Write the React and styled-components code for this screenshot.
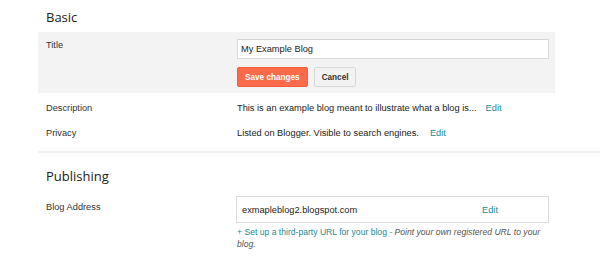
import styled, { createGlobalStyle } from 'styled-components'

const Global = createGlobalStyle`
  body {
    margin: 0;
    background: #fff;
    font-family: "Liberation Sans", Arial, sans-serif;
    color: #222;
  }
`

const Page = styled.div`
  width: 600px;
  height: 258px;
  padding-left: 38px;
  box-sizing: border-box;
  overflow: hidden;
`

const SectionTitle = styled.h2`
  margin: 0;
  padding: ${p => p.$top}px 0 0 8px;
  font-family: "Open Sans", sans-serif;
  font-weight: 400;
  font-size: 13px;
  line-height: 18px;
  color: #222;
  height: ${p => p.$height}px;
  box-sizing: border-box;
`

const Row = styled.div`
  display: grid;
  grid-template-columns: 191px 1fr;
  width: 517px;
  box-sizing: border-box;
  padding: ${p => p.$pad || '0 6px 0 8px'};
  background: ${p => (p.$editing ? '#f3f3f3' : 'transparent')};
  font-size: 9.25px;
  line-height: 12px;
`

const Label = styled.div`
  color: #333;
  padding-top: ${p => p.$top || 0}px;
`

const Value = styled.div`
  color: #222;
`

const TextInput = styled.input`
  display: block;
  width: 100%;
  height: 20px;
  box-sizing: border-box;
  border: 1px solid #dcdcdc;
  border-top-color: #d4d4d4;
  background: #fff;
  padding: 0 3px;
  font-family: "Liberation Sans", Arial, sans-serif;
  font-size: 9.25px;
  color: #222;
  outline: none;
`

const Buttons = styled.div`
  display: flex;
  gap: 6px;
  margin-top: 8px;
`

const Button = styled.button`
  height: 20px;
  box-sizing: border-box;
  padding: 0 7px;
  border-radius: 2px;
  border: 1px solid ${p => (p.$primary ? '#f0603f' : '#d8d8d8')};
  background: ${p => (p.$primary ? '#fb6a4a' : '#f2f2f2')};
  color: ${p => (p.$primary ? '#fff' : '#333')};
  font-family: "Liberation Sans", Arial, sans-serif;
  font-weight: 700;
  font-size: 8.2px;
`

const Edit = styled.a`
  color: #1d8a96;
  text-decoration: none;
  margin-left: ${p => p.$gap || 0}px;
  margin-right: ${p => p.$right || 0}px;
`

const Divider = styled.hr`
  border: 0;
  height: 2px;
  background: #f2f2f2;
  margin: 8px 0 0;
`

const AddressBox = styled.div`
  display: flex;
  align-items: center;
  justify-content: space-between;
  height: 27px;
  margin-left: -1px;
  box-sizing: border-box;
  border: 1px solid #dcdcdc;
  padding-left: 5px;
  color: #222;
`

const Hint = styled.p`
  margin: 3px 0 0;
  width: 312px;
  font-size: 8.6px;
  line-height: 12px;
  font-style: italic;
  color: #555;
`

const HintLink = styled.a`
  font-style: normal;
  color: #1d8a96;
  text-decoration: none;
`

export default function App() {
  return (
    <Page>
      <Global />
      <SectionTitle $top={8} $height={32}>Basic</SectionTitle>
      <Row $editing $pad="7px 6px 6px 8px">
        <Label>Title</Label>
        <div>
          <TextInput defaultValue="My Example Blog" />
          <Buttons>
            <Button $primary>Save changes</Button>
            <Button>Cancel</Button>
          </Buttons>
        </div>
      </Row>
      <Row $pad="9px 6px 4px 8px">
        <Label>Description</Label>
        <Value>
          This is an example blog meant to illustrate what a blog is...
          <Edit $gap={9}>Edit</Edit>
        </Value>
      </Row>
      <Row $pad="9px 6px 4px 8px">
        <Label>Privacy</Label>
        <Value>
          Listed on Blogger. Visible to search engines.
          <Edit $gap={11}>Edit</Edit>
        </Value>
      </Row>
      <Divider />
      <SectionTitle $top={14} $height={43}>Publishing</SectionTitle>
      <Row>
        <Label $top={5}>Blog Address</Label>
        <div>
          <AddressBox>
            <span>exmapleblog2.blogspot.com</span>
            <Edit $right={50}>Edit</Edit>
          </AddressBox>
          <Hint>
            <HintLink>+ Set up a third-party URL for your blog</HintLink> - Point your own registered URL to your blog.
          </Hint>
        </div>
      </Row>
    </Page>
  )
}
